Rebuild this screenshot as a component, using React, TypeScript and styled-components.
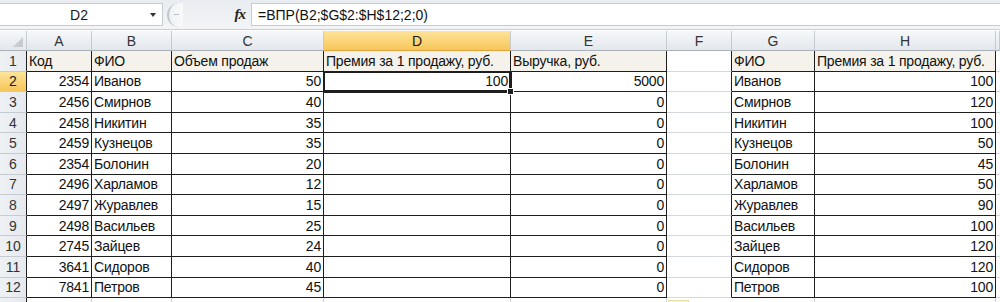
import React from "react";
import styled, { createGlobalStyle, css } from "styled-components";

const GlobalStyle = createGlobalStyle`
  html, body {
    margin: 0;
    padding: 0;
    background: #ffffff;
  }
  body {
    font-family: "Liberation Sans", Arial, sans-serif;
    overflow: hidden;
  }
`;

const COLS = [27, 65, 80, 152, 187, 156, 65, 83, 181, 4];
const LETTERS = ["A", "B", "C", "D", "E", "F", "G", "H", ""];
const ROW_H = 20.6;
const DARK = "#1e1e1e";
const LIGHT = "#d4d7dc";

type Row = {
  code: string;
  name: string;
  volume: string;
  bonus: string;
  revenue: string;
  refName: string;
  refBonus: string;
};

const rows: Row[] = [
  { code: "2354", name: "Иванов", volume: "50", bonus: "100", revenue: "5000", refName: "Иванов", refBonus: "100" },
  { code: "2456", name: "Смирнов", volume: "40", bonus: "", revenue: "0", refName: "Смирнов", refBonus: "120" },
  { code: "2458", name: "Никитин", volume: "35", bonus: "", revenue: "0", refName: "Никитин", refBonus: "100" },
  { code: "2459", name: "Кузнецов", volume: "35", bonus: "", revenue: "0", refName: "Кузнецов", refBonus: "50" },
  { code: "2354", name: "Болонин", volume: "20", bonus: "", revenue: "0", refName: "Болонин", refBonus: "45" },
  { code: "2496", name: "Харламов", volume: "12", bonus: "", revenue: "0", refName: "Харламов", refBonus: "50" },
  { code: "2497", name: "Журавлев", volume: "15", bonus: "", revenue: "0", refName: "Журавлев", refBonus: "90" },
  { code: "2498", name: "Васильев", volume: "25", bonus: "", revenue: "0", refName: "Васильев", refBonus: "100" },
  { code: "2745", name: "Зайцев", volume: "24", bonus: "", revenue: "0", refName: "Зайцев", refBonus: "120" },
  { code: "3641", name: "Сидоров", volume: "40", bonus: "", revenue: "0", refName: "Сидоров", refBonus: "120" },
  { code: "7841", name: "Петров", volume: "45", bonus: "", revenue: "0", refName: "Петров", refBonus: "100" },
];

const Window = styled.div`
  width: 1000px;
  height: 302px;
  overflow: hidden;
  display: flex;
  flex-direction: column;
  background: #ffffff;
`;

const FormulaBar = styled.div`
  height: 30px;
  box-sizing: border-box;
  display: flex;
  align-items: stretch;
  padding: 3px 0 3px 0;
  background: linear-gradient(#e9ecf0, #f3f5f7);
  border-bottom: 1px solid #c9ced5;
`;

const NameBox = styled.div`
  width: 163px;
  box-sizing: border-box;
  display: flex;
  align-items: center;
  background: #ffffff;
  border: 1px solid #c6ccd4;
  border-left: none;
  font-size: 14px;
  color: #1a1a1a;
`;

const NameText = styled.span`
  flex: 1;
  text-align: center;
  padding-left: 8px;
`;

const DropArrow = styled.span`
  width: 0;
  height: 0;
  margin-right: 6px;
  border-left: 3px solid transparent;
  border-right: 3px solid transparent;
  border-top: 4px solid #333;
`;

const Splitter = styled.div`
  width: 88px;
  display: flex;
  align-items: center;
  justify-content: space-between;
  padding: 0 6px 0 4px;
  box-sizing: border-box;
`;

const Grip = styled.div`
  width: 14px;
  height: 24px;
  border-radius: 12px 0 0 12px;
  border-left: 2px solid #c3c8cf;
  background: linear-gradient(90deg, #eef1f4, #f8f9fa);
  display: flex;
  align-items: center;
  justify-content: center;
  &::after {
    content: "";
    width: 5px;
    height: 1px;
    background: #b8bec6;
  }
`;

const Fx = styled.span`
  font-family: "Liberation Serif", "Times New Roman", serif;
  font-style: italic;
  font-weight: bold;
  font-size: 15px;
  color: #222;
  letter-spacing: -1px;
`;

const FormulaInput = styled.div`
  flex: 1;
  display: flex;
  align-items: center;
  padding-left: 6px;
  background: #ffffff;
  border: 1px solid #c6ccd4;
  border-right: none;
  font-size: 14px;
  color: #111;
`;

const Grid = styled.div`
  margin-top: 1px;
  display: grid;
  grid-template-columns: ${COLS.map((w) => `${w}px`).join(" ")};
  grid-template-rows: 20px;
  grid-auto-rows: ${ROW_H}px;
  font-size: 14px;
  color: #111;
`;

const HeaderCell = styled.div<{ $active?: boolean }>`
  box-sizing: border-box;
  display: flex;
  align-items: center;
  justify-content: center;
  font-size: 14px;
  color: #333;
  border-right: 1px solid #c6cbd2;
  border-bottom: 1px solid #a9b0b8;
  background: linear-gradient(#f6f8fa, #e3e7ec);
  ${(p) =>
    p.$active &&
    css`
      background: linear-gradient(#fde49a, #f7c65a);
      border-bottom-color: #e2a33c;
      color: #1a1a1a;
    `}
`;

const Corner = styled(HeaderCell)`
  position: relative;
  &::after {
    content: "";
    position: absolute;
    right: 3px;
    bottom: 3px;
    width: 0;
    height: 0;
    border-left: 10px solid transparent;
    border-bottom: 10px solid #c8ccd2;
  }
`;

const RowHead = styled.div<{ $active?: boolean }>`
  box-sizing: border-box;
  display: flex;
  align-items: center;
  justify-content: center;
  font-size: 14px;
  color: #333;
  border-right: 1px solid ${DARK};
  border-bottom: 1px solid #c6cbd2;
  background: linear-gradient(90deg, #eef1f4, #e6e9ee);
  ${(p) =>
    p.$active &&
    css`
      background: linear-gradient(#fde49a, #f7c65a);
      color: #1a1a1a;
    `}
`;

const Cell = styled.div<{
  $num?: boolean;
  $head?: boolean;
  $right?: string;
  $bottom?: string;
}>`
  box-sizing: border-box;
  display: flex;
  align-items: center;
  justify-content: ${(p) => (p.$num ? "flex-end" : "flex-start")};
  padding: 0 2px 0 2px;
  white-space: nowrap;
  overflow: visible;
  letter-spacing: -0.2px;
  border-right: 1px solid ${(p) => p.$right || DARK};
  border-bottom: 1px solid ${(p) => p.$bottom || DARK};
  background: ${(p) => (p.$head ? "#f4f2ea" : "#ffffff")};
`;

const Selected = styled(Cell)`
  position: relative;
  box-shadow: inset 0 0 0 1px ${DARK}, 0 0 0 1px ${DARK};
  &::after {
    content: "";
    position: absolute;
    right: -4px;
    bottom: -4px;
    width: 5px;
    height: 5px;
    background: ${DARK};
    border: 1px solid #ffffff;
    z-index: 2;
  }
`;

const PasteTag = styled.div`
  position: relative;
  &::after {
    content: "";
    position: absolute;
    left: 1px;
    top: 2px;
    width: 19px;
    height: 10px;
    background: #fbf3d0;
    border: 1px solid #e8dca8;
  }
`;

export default function App() {
  const headerRow = ["Код", "ФИО", "Объем продаж", "Премия за 1 продажу, руб.", "Выручка, руб."];
  return (
    <>
      <GlobalStyle />
      <Window>
        <FormulaBar>
          <NameBox>
            <NameText>D2</NameText>
            <DropArrow />
          </NameBox>
          <Splitter>
            <Grip />
            <Fx>fx</Fx>
          </Splitter>
          <FormulaInput>=ВПР(B2;$G$2:$H$12;2;0)</FormulaInput>
        </FormulaBar>
        <Grid>
          <Corner />
          {LETTERS.map((l, i) => (
            <HeaderCell key={i} $active={l === "D"}>
              {l}
            </HeaderCell>
          ))}

          <RowHead>1</RowHead>
          {headerRow.map((t, i) => (
            <Cell key={i} $head>
              {t}
            </Cell>
          ))}
          <Cell $bottom={LIGHT} />
          <Cell $head>ФИО</Cell>
          <Cell $head>Премия за 1 продажу, руб.</Cell>
          <Cell $right="transparent" $bottom={LIGHT} />

          {rows.map((r, i) => (
            <React.Fragment key={i}>
              <RowHead $active={i === 0}>{i + 2}</RowHead>
              <Cell $num>{r.code}</Cell>
              <Cell>{r.name}</Cell>
              <Cell $num>{r.volume}</Cell>
              {i === 0 ? <Selected $num>{r.bonus}</Selected> : <Cell $num>{r.bonus}</Cell>}
              <Cell $num>{r.revenue}</Cell>
              <Cell $bottom={LIGHT} />
              <Cell>{r.refName}</Cell>
              <Cell $num>{r.refBonus}</Cell>
              <Cell $right="transparent" $bottom={LIGHT} />
            </React.Fragment>
          ))}

          <RowHead />
          <Cell $right={LIGHT} $bottom={LIGHT} />
          <Cell $right={LIGHT} $bottom={LIGHT} />
          <Cell $right={LIGHT} $bottom={LIGHT} />
          <Cell $right={LIGHT} $bottom={LIGHT} />
          <Cell $right={LIGHT} $bottom={LIGHT} />
          <PasteTag />
          <Cell $right={LIGHT} $bottom={LIGHT} />
          <Cell $right={LIGHT} $bottom={LIGHT} />
          <Cell $right="transparent" $bottom={LIGHT} />
        </Grid>
      </Window>
    </>
  );
}
